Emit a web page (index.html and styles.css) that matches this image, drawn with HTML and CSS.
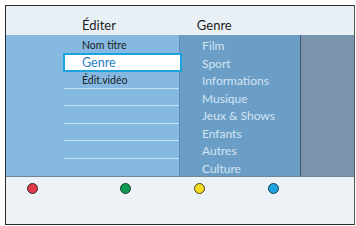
FILE: index.html
```html
<!DOCTYPE html>
<html lang="fr">
<head>
<meta charset="utf-8">
<link rel="stylesheet" href="styles.css">
</head>
<body>
<div class="frame">
  <div class="header">
    <span class="h-left">Éditer</span>
    <span class="h-right">Genre</span>
  </div>
  <div class="main">
    <div class="col-left">
      <ul class="menu">
        <li class="row">Nom titre</li>
        <li class="row sel">Genre</li>
        <li class="row line">Édit.vidéo</li>
        <li class="row line"></li>
        <li class="row line"></li>
        <li class="row line"></li>
        <li class="row line"></li>
        <li class="row"></li>
      </ul>
    </div>
    <div class="col-mid">
      <ul class="genres">
        <li>Film</li>
        <li>Sport</li>
        <li>Informations</li>
        <li>Musique</li>
        <li>Jeux &amp; Shows</li>
        <li>Enfants</li>
        <li>Autres</li>
        <li>Culture</li>
      </ul>
    </div>
    <div class="col-right"></div>
  </div>
  <div class="footer">
    <span class="dot red"></span>
    <span class="dot green"></span>
    <span class="dot yellow"></span>
    <span class="dot blue"></span>
  </div>
</div>
</body>
</html>
```
FILE: styles.css
```css
html, body {
  margin: 0;
  padding: 0;
  background: #ffffff;
}
body {
  font-family: Lato, "Open Sans", "DejaVu Sans", sans-serif;
}
.frame {
  margin: 5px 0 0 5px;
  width: 348px;
  height: 218px;
  border: 1px solid #2b2b2b;
  border-right-color: #555;
  display: flex;
  flex-direction: column;
  background: #ecf2f6;
}
.header {
  height: 29px;
  background: #e8f0f6;
  display: flex;
  align-items: center;
  font-size: 13px;
  color: #1e1e1e;
}
.h-left {
  margin-left: 76px;
  padding-top: 9px;
}
.h-right {
  margin-left: 81px;
  padding-top: 9px;
}
.main {
  height: 141px;
  display: flex;
  border-bottom: 1px solid #6f8799;
}
.col-left {
  width: 173px;
  background: #86b9e2;
  display: flex;
  justify-content: flex-end;
}
.menu {
  list-style: none;
  margin: 0;
  padding: 1px 0 0 0;
  width: 115px;
  font-size: 10.5px;
  color: #1c1c1c;
}
.row {
  height: 17.5px;
  box-sizing: border-box;
  padding-left: 18px;
  line-height: 19px;
}
.row.line {
  border-bottom: 1px solid #c4e0f5;
}
.row.sel {
  background: #ffffff;
  border: 2px solid #1ba3de;
  margin-left: -1px;
  margin-right: -3px;
  padding-left: 17px;
  font-size: 12.5px;
  line-height: 15px;
  color: #2a80c6;
  height: 19px;
  margin-top: -1px;
  margin-bottom: -0.5px;
  position: relative;
}
.col-mid {
  width: 121px;
  background: #6a9ec7;
  border-left: 1px solid #5f8fb5;
  box-sizing: border-box;
}
.genres {
  list-style: none;
  margin: 0;
  padding: 2px 0 0 22px;
  font-size: 12px;
  color: #d3e4f2;
}
.genres li {
  height: 17.5px;
  line-height: 18px;
}
.col-right {
  flex: 1;
  background: #7994ab;
  border-left: 1px solid #3f5a70;
}
.footer {
  flex: 1;
  background: #ecf2f6;
  display: flex;
  align-items: flex-start;
  padding: 6px 0 0 21px;
}
.dot {
  width: 11px;
  height: 11px;
  border-radius: 50%;
  border: 1px solid #3a2a2a;
  box-sizing: border-box;
  display: block;
}
.red { background: #e23a48; }
.green { background: #0f9a55; margin-left: 82px; border-color: #1a3a2a; }
.yellow { background: #f5dc22; margin-left: 63px; border-color: #4a4420; }
.blue { background: #1ca3e0; margin-left: 63px; border-color: #1a3a50; }
```
